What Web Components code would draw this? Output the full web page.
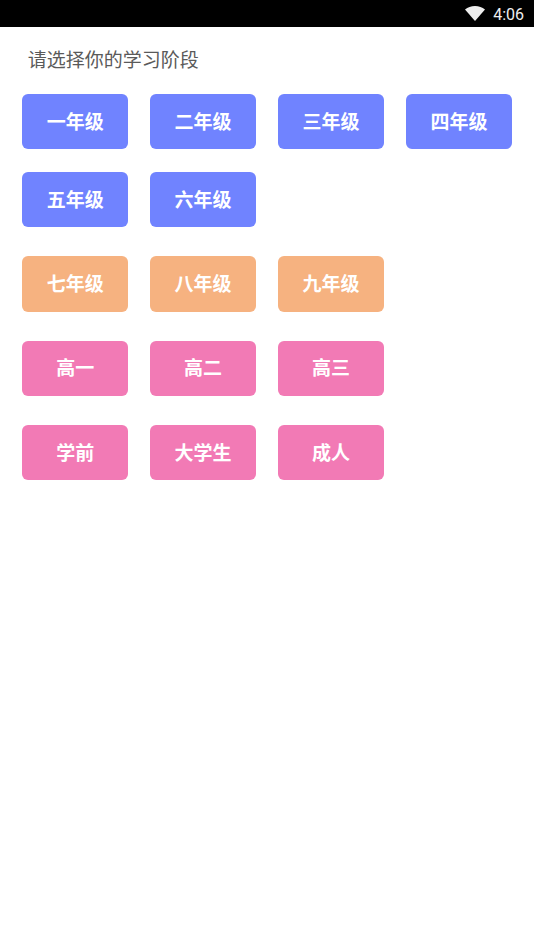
<!DOCTYPE html>
<html lang="zh-CN">
<head>
<meta charset="utf-8">
<style>
  html, body { margin: 0; background: #fff; }
  body { font-family: "Noto Sans CJK SC", "Noto Sans", sans-serif; }
</style>
</head>
<body>
<template id="status-bar">
  <style>
    :host { display: flex; justify-content: flex-end; align-items: center; height: 27px; background: #000; color: #eee; padding-right: 10px; }
    svg { width: 20px; height: 15px; margin-right: 8px; }
    span { font: 16px Roboto, sans-serif; position: relative; top: 1px; }
  </style>
  <svg viewBox="0 0 20 15"><path d="M0 3.6C2.7 1.3 6.2 0 10 0s7.3 1.300 10 3.600L10 15z" fill="#eee"/></svg>
  <span><slot></slot></span>
</template>

<template id="grade-group">
  <style>
    :host { display: grid; grid-template-columns: repeat(4, 105.700px); gap: 22.600px 22.300px; margin-bottom: 28.900px; }
  </style>
  <slot></slot>
</template>

<template id="grade-button">
  <style>
    :host { display: flex; align-items: center; justify-content: center; box-sizing: border-box; height: 55.400px; padding-bottom: 3px; border-radius: 6px; background: var(--tone, #7083ff); color: #fff; font: 700 19px "Noto Sans CJK SC", sans-serif; }
  </style>
  <slot></slot>
</template>

<status-bar>4:06</status-bar>
<main style="display:block;padding:0 22.300px">
  <h1 style="margin:0;padding:18px 0 22px 5.500px;font-size:19px;line-height:27px;font-weight:400;color:#5a5a5a">请选择你的学习阶段</h1>
  <grade-group style="--tone:#7083ff">
    <grade-button>一年级</grade-button>
    <grade-button>二年级</grade-button>
    <grade-button>三年级</grade-button>
    <grade-button>四年级</grade-button>
    <grade-button>五年级</grade-button>
    <grade-button>六年级</grade-button>
  </grade-group>
  <grade-group style="--tone:#f6b280">
    <grade-button>七年级</grade-button>
    <grade-button>八年级</grade-button>
    <grade-button>九年级</grade-button>
  </grade-group>
  <grade-group style="--tone:#f27ab5">
    <grade-button>高一</grade-button>
    <grade-button>高二</grade-button>
    <grade-button>高三</grade-button>
  </grade-group>
  <grade-group style="--tone:#f27ab5">
    <grade-button>学前</grade-button>
    <grade-button>大学生</grade-button>
    <grade-button>成人</grade-button>
  </grade-group>
</main>

<script>
// all three elements just clone their template into an open shadow root
class TemplatedElement extends HTMLElement {
  constructor() {
    super();
    var shadow = this.attachShadow({mode: 'open'});
    shadow.appendChild(document.getElementById(this.localName).content.cloneNode(true));
  }
}
customElements.define('status-bar', class extends TemplatedElement {});
customElements.define('grade-group', class extends TemplatedElement {});
customElements.define('grade-button', class extends TemplatedElement {});
</script>
</body>
</html>
